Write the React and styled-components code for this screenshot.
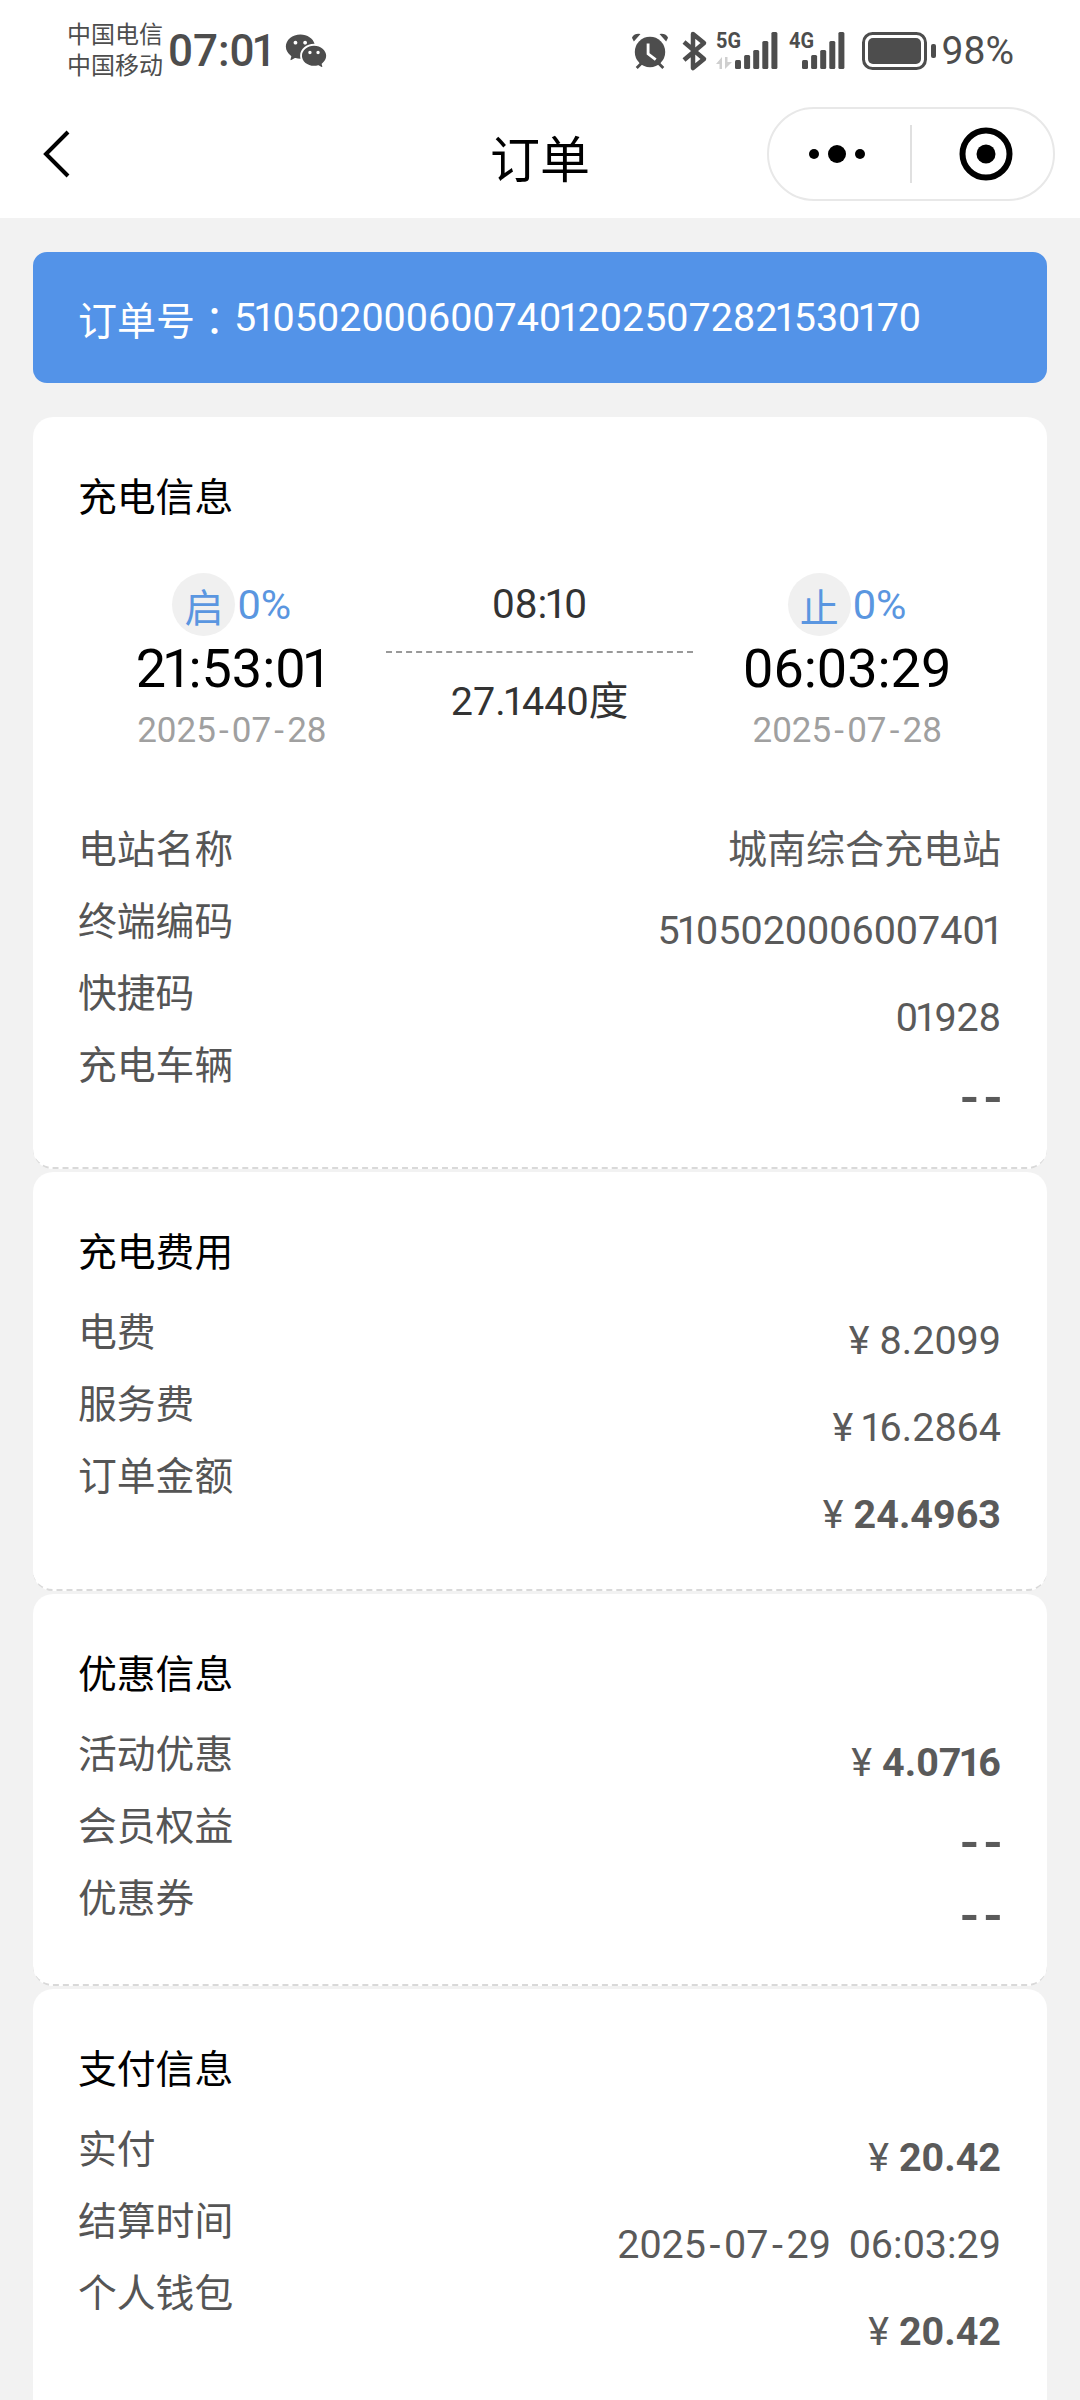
import React from 'react';
import styled, { createGlobalStyle } from 'styled-components';
import { RiWechatFill } from 'react-icons/ri';

const GlobalStyle = createGlobalStyle`
  html, body {
    margin: 0;
    padding: 0;
    background: #f2f2f2;
  }
  * { box-sizing: border-box; }
  body {
    font-family: Roboto, "Noto Sans CJK SC", sans-serif;
  }
`;

const Page = styled.div`
  width: 1080px;
  height: 2400px;
  overflow: hidden;
  background: #f2f2f2;
`;

const Header = styled.div`
  height: 218px;
  background: #fff;
`;

const StatusBar = styled.div`
  height: 96px;
  padding: 6px 66px 0 67px;
  display: flex;
  align-items: center;
  color: #4d4d4d;
`;

const Carriers = styled.div`
  font-size: 24px;
  line-height: 31px;
  width: 101px;
`;

const Clock = styled.div`
  font-size: 44px;
  font-weight: 500;
  width: 120px;
`;

const WechatIcon = styled(RiWechatFill)`
  margin-left: -4px;
`;

const StatusRight = styled.div`
  margin-left: auto;
  display: flex;
  align-items: center;
`;

const StatusIcon = styled.svg`
  margin-left: ${(p) => p.$ml || 0}px;
  overflow: visible;
  flex: none;
`;

const Percent = styled.div`
  font-size: 39px;
  margin-left: 6px;
`;

const NavBar = styled.div`
  height: 122px;
  position: relative;
  display: flex;
  align-items: center;
  justify-content: center;
`;

const NavTitle = styled.div`
  font-size: 50px;
  color: #000;
  margin-top: -2px;
`;

const BackIcon = styled.svg`
  position: absolute;
  left: 42px;
  top: 33px;
`;

const Capsule = styled.div`
  position: absolute;
  left: 767px;
  top: 11px;
  width: 288px;
  height: 94px;
  border: 2px solid #e8e8e8;
  border-radius: 47px;
  display: flex;
  align-items: center;
`;

const CapsuleDivider = styled.div`
  width: 2px;
  height: 58px;
  background: #e0e0e0;
`;

const CapsuleCell = styled.div`
  flex: 1;
  display: flex;
  align-items: center;
  justify-content: center;
  padding: ${(p) => (p.$end ? '0 0 0 6px' : '0 6px 0 0')};
`;

const Content = styled.div`
  padding: 34px 33px 0 33px;
`;

const Banner = styled.div`
  height: 131px;
  border-radius: 14px;
  background: #5393e8;
  color: #fff;
  font-size: 39.5px;
  padding-left: 45px;
  display: flex;
  align-items: center;
  margin-bottom: 34px;
`;

const BannerLabel = styled.span`
  font-size: 39px;
`;

const CenteredColon = styled.span`
  font-family: "Noto Sans CJK TC", sans-serif;
  font-size: 39px;
`;

const Card = styled.div`
  background: #fff;
  border-radius: 20px;
  padding: 55px 46px 0 45px;
  height: ${(p) => p.$height}px;
  margin-bottom: 3px;
  border-bottom: 2px dashed #d9d9d9;
`;

const CardTitle = styled.div`
  font-size: 38.8px;
  line-height: 52px;
  color: #000;
`;

const Stats = styled.div`
  display: grid;
  grid-template-columns: repeat(3, 1fr);
  margin-top: 49px;
`;

const Endpoint = styled.div`
  display: flex;
  flex-direction: column;
  align-items: center;
`;

const Soc = styled.div`
  display: flex;
  align-items: center;
  height: 63px;
  color: #5a96e0;
  font-size: 41.5px;
`;

const SocBadge = styled.span`
  width: 63px;
  height: 63px;
  border-radius: 50%;
  background: #f0f0f0;
  display: flex;
  align-items: center;
  justify-content: center;
  margin-right: 2px;
  font-size: 39px;
`;

const Time = styled.div`
  font-size: 54px;
  line-height: 60px;
  color: #000;
  margin-top: 3px;
`;

const DateText = styled.div`
  font-size: 35px;
  line-height: 50px;
  color: #a0a0a0;
  margin-top: 7px;
`;

const Middle = styled.div`
  display: flex;
  flex-direction: column;
  align-items: stretch;
  text-align: center;
  font-size: 39.5px;
  color: #333;
`;

const MidTop = styled.div`
  font-size: 40.5px;
  line-height: 63px;
  height: 63px;
`;

const MidLine = styled.div`
  border-top: 2px dashed #999;
  margin-top: 15px;
`;

const MidBottom = styled.div`
  line-height: 52px;
  margin-top: 23px;
`;

const Details = styled.div`
  display: flex;
  justify-content: space-between;
  margin-top: ${(p) => p.$gap}px;
`;

const LabelCol = styled.div`
  display: flex;
  flex-direction: column;
  gap: 20px;
`;

const ValueCol = styled.div`
  display: flex;
  flex-direction: column;
  align-items: flex-end;
  margin-top: -10px;
`;

const Label = styled.div`
  font-size: 38.8px;
  line-height: 52px;
  color: #555;
`;

// rows holding Chinese text or dashes are shorter than the rows of digits
const Value = styled.div`
  font-size: ${(p) => (p.$short ? 39 : 39.5)}px;
  line-height: ${(p) => (p.$short ? 73 : 87)}px;
  height: ${(p) => (p.$short ? 73 : 87)}px;
  font-weight: ${(p) => (p.$bold ? 700 : 400)};
  color: #5a5a5a;
  word-spacing: 8px;
  white-space: nowrap;
`;

const Dashes = styled.span`
  font-size: 54px;
  font-weight: 500;
  letter-spacing: 5px;
  margin-right: -6px;
`;

const Yen = styled.span`
  font-weight: 400;
  margin-right: 10px;
`;

const One = styled.span`
  margin: 0 -0.074em;
`;

const Hyphen = styled.span`
  margin: 0 0.09em;
`;

// the font of the reference has a narrow 1 and a long hyphen
const Num = ({ children }) =>
  children.split(/([1-])/).map((part, i) => {
    if (part === '1') return <One key={i}>1</One>;
    if (part === '-') return <Hyphen key={i}>-</Hyphen>;
    return part;
  });

const Money = ({ children }) => (
  <>
    <Yen>¥</Yen>
    <Num>{children}</Num>
  </>
);

const AlarmIcon = () => (
  <StatusIcon width="38" height="40" viewBox="0 0 40 40">
    <path d="M3 10 L10 2 Q3 1 1 6 Z M37 10 L30 2 Q37 1 39 6 Z" fill="#4d4d4d" />
    <circle cx="20" cy="21" r="16" fill="#4d4d4d" />
    <path d="M6 38 L11 33 M34 38 L29 33" stroke="#4d4d4d" strokeWidth="3" />
    <path d="M18 12 V23 L26 29" stroke="#fff" strokeWidth="3" fill="none" />
  </StatusIcon>
);

const BluetoothIcon = () => (
  <StatusIcon $ml={12} width="26" height="40" viewBox="0 0 26 40">
    <path d="M3 11 L23 28 L12 37 V3 L23 12 L3 29" stroke="#4d4d4d" strokeWidth="4.5" fill="none" strokeLinejoin="round" />
  </StatusIcon>
);

const BAR_HEIGHTS = [9, 14, 19, 28, 37];

const SignalIcon = ({ label, offset, width, ml, arrows }) => (
  <StatusIcon $ml={ml} width={width} height="40" viewBox={`0 0 ${width} 40`}>
    <text x="0" y="17" fontSize="22" fontWeight="700" fontFamily="Roboto" fill="#4d4d4d" textLength="25" lengthAdjust="spacingAndGlyphs">{label}</text>
    {arrows && <path d="M0 33 L6 26 V38 H3.5 V33 Z M9 26 V38 L16 31 H11.5 V26 Z" fill="#cfcfcf" />}
    {BAR_HEIGHTS.map((h, i) => (
      <rect key={i} x={offset + i * 9.1} y={38 - h} width="6" height={h} rx="1.5" fill="#4d4d4d" />
    ))}
  </StatusIcon>
);

const BatteryIcon = () => (
  <StatusIcon $ml={18} width="74" height="40" viewBox="0 0 74 40">
    <rect x="1.5" y="2.5" width="62" height="35" rx="9" fill="none" stroke="#4d4d4d" strokeWidth="3" />
    <rect x="6" y="7" width="53" height="26" rx="5" fill="#4d4d4d" />
    <rect x="69" y="13" width="5" height="14" rx="2" fill="#4d4d4d" />
  </StatusIcon>
);

const App = () => {
  return (
    <Page>
      <GlobalStyle />
      <Header>
        <StatusBar>
          <Carriers>
            <div>中国电信</div>
            <div>中国移动</div>
          </Carriers>
          <Clock><Num>07:01</Num></Clock>
          <WechatIcon size={44} />
          <StatusRight>
            <AlarmIcon />
            <BluetoothIcon />
            <SignalIcon label="5G" arrows offset={19} width={61} ml={9} />
            <SignalIcon label="4G" offset={13} width={55} ml={12} />
            <BatteryIcon />
            <Percent>98%</Percent>
          </StatusRight>
        </StatusBar>
        <NavBar>
          <BackIcon width="30" height="50" viewBox="0 0 30 50">
            <path d="M26 3 L4 25 L26 47" stroke="#000" strokeWidth="4" fill="none" />
          </BackIcon>
          <NavTitle>订单</NavTitle>
          <Capsule>
            <CapsuleCell>
              <svg width="56" height="20" viewBox="0 0 56 20">
                <circle cx="5" cy="10" r="5" fill="#000" />
                <circle cx="28" cy="10" r="9" fill="#000" />
                <circle cx="51" cy="10" r="5" fill="#000" />
              </svg>
            </CapsuleCell>
            <CapsuleDivider />
            <CapsuleCell $end>
              <svg width="54" height="54" viewBox="0 0 54 54">
                <circle cx="27" cy="27" r="23.5" stroke="#000" strokeWidth="6" fill="none" />
                <circle cx="27" cy="27" r="9.5" fill="#000" />
              </svg>
            </CapsuleCell>
          </Capsule>
        </NavBar>
      </Header>
      <Content>
        <Banner>
          <BannerLabel>订单号</BannerLabel>
          <CenteredColon>：</CenteredColon>
          <span><Num>51050200060074012025072821530170</Num></span>
        </Banner>

        <Card $height={752}>
          <CardTitle>充电信息</CardTitle>
          <Stats>
            <Endpoint>
              <Soc><SocBadge>启</SocBadge>0%</Soc>
              <Time><Num>21:53:01</Num></Time>
              <DateText><Num>2025-07-28</Num></DateText>
            </Endpoint>
            <Middle>
              <MidTop><Num>08:10</Num></MidTop>
              <MidLine />
              <MidBottom><Num>27.1440</Num>度</MidBottom>
            </Middle>
            <Endpoint>
              <Soc><SocBadge>止</SocBadge>0%</Soc>
              <Time>06:03:29</Time>
              <DateText><Num>2025-07-28</Num></DateText>
            </Endpoint>
          </Stats>
          <Details $gap={68}>
            <LabelCol>
              <Label>电站名称</Label>
              <Label>终端编码</Label>
              <Label>快捷码</Label>
              <Label>充电车辆</Label>
            </LabelCol>
            <ValueCol>
              <Value $short>城南综合充电站</Value>
              <Value><Num>5105020006007401</Num></Value>
              <Value><Num>01928</Num></Value>
              <Value $short><Dashes>--</Dashes></Value>
            </ValueCol>
          </Details>
        </Card>

        <Card $height={419}>
          <CardTitle>充电费用</CardTitle>
          <Details $gap={28}>
            <LabelCol>
              <Label>电费</Label>
              <Label>服务费</Label>
              <Label>订单金额</Label>
            </LabelCol>
            <ValueCol>
              <Value><Money>8.2099</Money></Value>
              <Value><Money>16.2864</Money></Value>
              <Value $bold><Money>24.4963</Money></Value>
            </ValueCol>
          </Details>
        </Card>

        <Card $height={392}>
          <CardTitle>优惠信息</CardTitle>
          <Details $gap={28}>
            <LabelCol>
              <Label>活动优惠</Label>
              <Label>会员权益</Label>
              <Label>优惠券</Label>
            </LabelCol>
            <ValueCol>
              <Value $bold><Money>4.0716</Money></Value>
              <Value $short><Dashes>--</Dashes></Value>
              <Value $short><Dashes>--</Dashes></Value>
            </ValueCol>
          </Details>
        </Card>

        <Card $height={500}>
          <CardTitle>支付信息</CardTitle>
          <Details $gap={28}>
            <LabelCol>
              <Label>实付</Label>
              <Label>结算时间</Label>
              <Label>个人钱包</Label>
            </LabelCol>
            <ValueCol>
              <Value $bold><Money>20.42</Money></Value>
              <Value><Num>2025-07-29 06:03:29</Num></Value>
              <Value $bold><Money>20.42</Money></Value>
            </ValueCol>
          </Details>
        </Card>
      </Content>
    </Page>
  );
};

export default App;
